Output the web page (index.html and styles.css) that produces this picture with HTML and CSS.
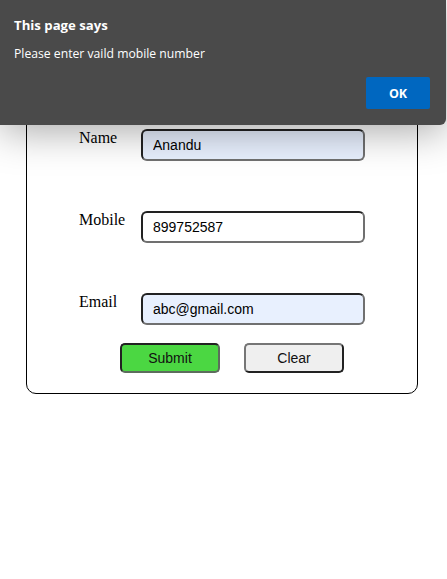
FILE: index.html
```html
<!DOCTYPE html>
<html>
<head>
<meta charset="utf-8">
<link rel="stylesheet" href="styles.css">
</head>
<body>
<div class="page">
  <form class="card">
    <div class="row">
      <label class="lbl">Name</label>
      <input class="field" type="text" value="Anandu">
    </div>
    <div class="row">
      <label class="lbl">Mobile</label>
      <input class="field white" type="text" value="899752587">
    </div>
    <div class="row">
      <label class="lbl">Email</label>
      <input class="field" type="text" value="abc@gmail.com">
    </div>
    <div class="actions">
      <button type="button" class="btn submit">Submit</button>
      <button type="button" class="btn clear">Clear</button>
    </div>
  </form>
</div>
<div class="dialog">
  <div class="d-title">This page says</div>
  <div class="d-msg">Please enter vaild mobile number</div>
  <div class="d-actions"><button type="button" class="ok">OK</button></div>
</div>
</body>
</html>
```
FILE: styles.css
```css
html, body { margin: 0; padding: 0; background: #fff; }
body { position: relative; width: 447px; height: 579px; overflow: hidden; }
.page { padding: 40px 0 0 26px; }
.card {
  box-sizing: border-box;
  width: 392px;
  border: 1px solid #000;
  border-radius: 10px;
  padding: 88px 0 20px 52px;
  margin: 0;
  display: flex;
  flex-direction: column;
  gap: 50px;
}
.row { display: grid; grid-template-columns: 62px 224px; align-items: start; }
.lbl {
  font-family: "Liberation Serif", serif;
  font-size: 16px;
  line-height: 18px;
  color: #000;
}
.field {
  box-sizing: border-box;
  width: 224px;
  height: 32px;
  margin: 0;
  border: 2px solid;
  border-color: #222 #707070 #707070 #222;
  border-radius: 6px;
  background: #e8f0fe;
  padding: 0 10px;
  font-family: "Liberation Sans", Arial, sans-serif;
  font-size: 14px;
  color: #000;
  outline: none;
}
.field.white { background: #fff; }
.actions {
  display: flex;
  gap: 24px;
  margin-top: -32px;
  padding-left: 41px;
}
.btn {
  box-sizing: border-box;
  width: 100px;
  height: 30px;
  margin: 0;
  border: 2px solid;
  border-radius: 5px;
  font-family: "Liberation Sans", Arial, sans-serif;
  font-size: 14px;
  color: #111;
  padding: 0;
}
.submit { background: #4bd742; border-color: #222 #5d6d5d #5d6d5d #222; }
.clear { background: #efefef; border-color: #767676 #222 #222 #767676; }
.dialog {
  position: absolute;
  left: 0;
  top: 0;
  width: 446px;
  height: 125px;
  box-sizing: border-box;
  background: #4a4a4a;
  border-bottom-right-radius: 6px;
  box-shadow: 0 6px 40px rgba(0,0,0,0.35);
  padding: 16px 16px 0 14px;
  font-family: "Open Sans", "Noto Sans", sans-serif;
  color: #fff;
}
.d-title { font-weight: 700; font-size: 13.2px; line-height: 19px; }
.d-msg { font-size: 12.2px; line-height: 18px; margin-top: 10px; }
.d-actions { display: flex; justify-content: flex-end; margin-top: 14px; }
.ok {
  width: 64px;
  height: 32px;
  border: none;
  border-radius: 2px;
  background: #0067c0;
  color: #fff;
  font-family: "Open Sans", "Noto Sans", sans-serif;
  font-weight: 700;
  font-size: 12.5px;
  padding: 0;
}
```
